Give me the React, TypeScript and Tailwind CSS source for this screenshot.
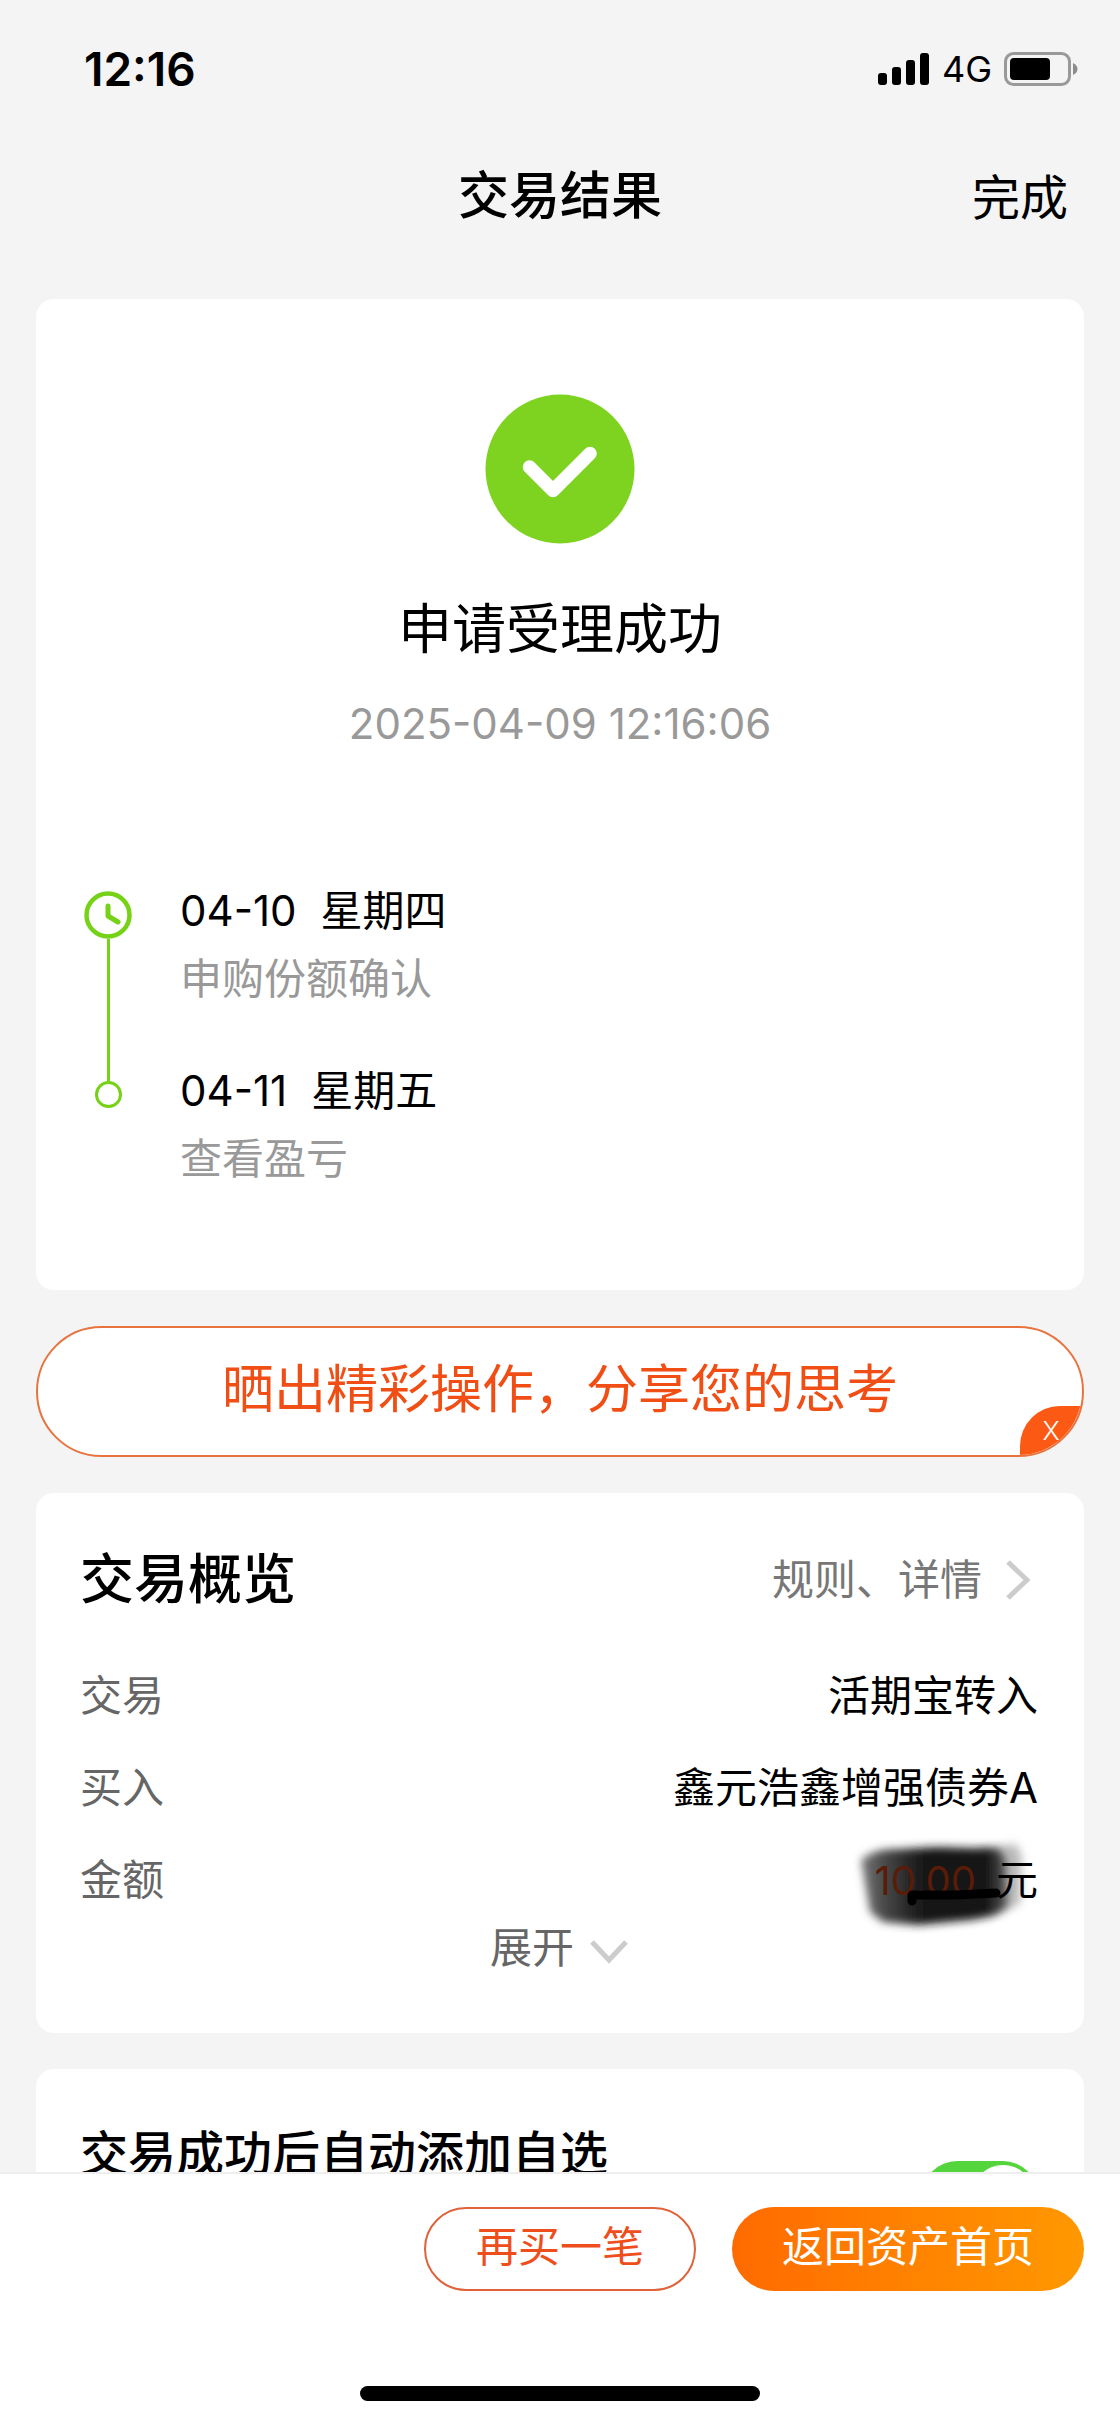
import { useState } from "react";

const steps = [
  { date: "04-10", weekday: "星期四", label: "申购份额确认" },
  { date: "04-11", weekday: "星期五", label: "查看盈亏" },
];

const StatusBar = () => (
  <div className="flex h-[138px] shrink-0 items-center justify-between pl-[84px] pr-[42px]">
    <span className="text-[46px] font-semibold leading-[48px]">12:16</span>
    <div className="flex items-center gap-3">
      <svg width="52" height="34" viewBox="0 0 52 34" aria-hidden="true">
        <rect x="0" y="21" width="9" height="12" rx="3" />
        <rect x="14" y="15" width="9" height="18" rx="3" />
        <rect x="28" y="8" width="9" height="25" rx="3" />
        <rect x="42" y="1" width="9" height="32" rx="3" />
      </svg>
      <span className="text-[36px] leading-[48px]">4G</span>
      <svg width="74" height="36" viewBox="0 0 74 36" aria-hidden="true">
        <rect x="1.5" y="2.5" width="64" height="31" rx="8" fill="none" stroke="#999" strokeWidth="3" />
        <rect x="6" y="7" width="40" height="22" rx="4" />
        <path d="M69 12c3 1.500 4.500 3.500 4.500 6s-1.500 4.500-4.500 6z" fill="#8c8c8c" />
      </svg>
    </div>
  </div>
);

const ClockIcon = () => (
  <svg width="48" height="48" viewBox="0 0 48 48" fill="none" stroke="#76d216" strokeLinecap="round" strokeLinejoin="round" aria-hidden="true">
    <circle cx="24" cy="24" r="21.500" strokeWidth="4.500" />
    <path d="M24 15v10l10 6" strokeWidth="5" />
  </svg>
);

const Row = ({ label, children }: { label: string; children: React.ReactNode }) => (
  <div className="flex h-[92px] items-center justify-between text-[42px] leading-[48px]">
    <dt className="text-[#666]">{label}</dt>
    <dd className="relative isolate">{children}</dd>
  </div>
);

export default function App() {
  const [autoAdd, setAutoAdd] = useState(true);
  const [showBanner, setShowBanner] = useState(true);

  return (
    <div className="flex h-screen flex-col bg-[#f4f4f4] font-[Inter,'Noto_Sans_CJK_SC',sans-serif] text-black">
      <StatusBar />

      {/* Title bar */}
      <header className="grid h-[116px] shrink-0 grid-cols-3 items-center px-[52px]">
        <h1 className="col-start-2 text-center text-[51px] font-medium leading-[64px]">交易结果</h1>
        <button type="button" className="justify-self-end pt-1 text-[48px] leading-[64px]">完成</button>
      </header>

      <main className="flex min-h-0 flex-1 flex-col gap-9 overflow-y-auto px-9 pt-[45px] [scrollbar-width:none]">
        {/* Result */}
        <section className="shrink-0 rounded-[18px] bg-white px-12 pb-[107px] pt-[95px]">
          <div className="flex flex-col items-center">
            <svg width="150" height="150" viewBox="0 0 150 150" aria-hidden="true">
              <circle cx="75" cy="75" r="74.500" fill="#7ed321" />
              <path d="M44.500 73L68 96.500L105 59.500" fill="none" stroke="#fff" strokeWidth="13.500" strokeLinecap="round" strokeLinejoin="round" />
            </svg>
            <h2 className="mt-[54px] text-[54px] leading-[64px]">申请受理成功</h2>
            <time className="mt-[38px] text-[42px] leading-[48px] text-[#999]">2025-04-09 12:16:06</time>
          </div>

          <ol className="mt-[139px]">
            {steps.map((step, i) => (
              <li key={step.date} className="flex gap-12">
                <div className="flex w-12 flex-col items-center">
                  {i === 0 ? (
                    <>
                      <div className="mt-1">
                        <ClockIcon />
                      </div>
                      <div className="w-[3px] flex-1 bg-[#76d216]" />
                    </>
                  ) : (
                    <>
                      <div className="h-[14px] w-[3px] bg-[#76d216]" />
                      <div className="size-[27px] rounded-full border-[3px] border-[#76d216]" />
                    </>
                  )}
                </div>
                <div className={i === 0 ? "pb-16" : ""}>
                  <p className="flex gap-6 text-[42px] leading-[48px]">
                    <span>{step.date}</span>
                    <span>{step.weekday}</span>
                  </p>
                  <p className="mt-5 text-[42px] leading-[48px] text-[#999]">{step.label}</p>
                </div>
              </li>
            ))}
          </ol>
        </section>

        {/* Share banner */}
        {showBanner && (
          <div className="relative flex h-[131px] shrink-0 overflow-hidden rounded-full border-2 border-[#e8733f] bg-white">
            <button type="button" className="flex-1 pb-1 text-[52px] leading-[64px] text-[#f04e14]">
              晒出精彩操作，分享您的思考
            </button>
            <button
              type="button"
              aria-label="关闭"
              onClick={() => setShowBanner(false)}
              className="absolute bottom-0 right-0 h-[49px] w-[62px] rounded-tl-[40px] bg-[#fc5a14] text-[26px] font-light leading-[48px] text-white"
            >
              X
            </button>
          </div>
        )}

        {/* Overview */}
        <section className="shrink-0 rounded-[18px] bg-white pb-[63px] pl-11 pr-[46px] pt-[55px]">
          <div className="flex items-center justify-between">
            <h2 className="text-[54px] font-medium leading-[64px]">交易概览</h2>
            <a href="#rules" className="flex items-center gap-6 pr-2 text-[42px] leading-[48px] text-[#777]">
              规则、详情
              <svg width="24" height="40" viewBox="0 0 24 40" fill="none" stroke="#ccc" strokeWidth="5" aria-hidden="true">
                <path d="M2 2l19 18L2 38" />
              </svg>
            </a>
          </div>
          <dl className="mt-[38px]">
            <Row label="交易">活期宝转入</Row>
            <Row label="买入">鑫元浩鑫增强债券A</Row>
            <Row label="金额">
              <svg className="absolute -top-6 right-0 -z-10" width="190" height="105" viewBox="0 0 190 105" aria-hidden="true">
                <defs>
                  <filter id="soft" x="-20%" y="-20%" width="140%" height="140%">
                    <feGaussianBlur stdDeviation="4" />
                  </filter>
                  <linearGradient id="ink">
                    <stop offset="0" stopColor="#777" />
                    <stop offset="0.18" stopColor="#444" />
                    <stop offset="0.4" stopColor="#1a1a1a" />
                    <stop offset="0.85" stopColor="#111" />
                    <stop offset="1" stopColor="#555" />
                  </linearGradient>
                </defs>
                <path d="M130 16L168 12L174 24L172 72L140 86Z" fill="#bbb" filter="url(#soft)" />
                <path d="M13 28Q26 16 50 17L90 15L150 17L157 26L159 74Q150 84 122 88L70 93L35 90L22 80Z" fill="url(#ink)" filter="url(#soft)" />
              </svg>
              <span className="mr-5 text-[40px] text-[#581c08]">10.00</span>
              元
              <svg className="absolute right-9 top-7" width="96" height="24" viewBox="0 0 96 24" fill="none" stroke="#000" strokeWidth="9" strokeLinecap="round" strokeLinejoin="round" aria-hidden="true">
                <path d="M6 17V11L50 11L90 9" />
              </svg>
            </Row>
          </dl>
          <button type="button" className="mx-auto flex h-11 items-center gap-4 text-[42px] leading-[44px] text-[#666]">
            展开
            <svg className="mt-2" width="38" height="24" viewBox="0 0 38 24" fill="none" stroke="#ccc" strokeWidth="5" aria-hidden="true">
              <path d="M2 2l17 18L36 2" />
            </svg>
          </button>
        </section>

        {/* Watchlist switch */}
        <section className="flex shrink-0 items-center justify-between rounded-[18px] bg-white pb-12 pl-11 pr-[46px] pt-[53px]">
          <label htmlFor="auto-add" className="h-[148px] text-[48px] font-medium leading-[64px]">
            交易成功后自动添加自选
          </label>
          <input
            id="auto-add"
            type="checkbox"
            role="switch"
            checked={autoAdd}
            onChange={(e) => setAutoAdd(e.target.checked)}
            className="h-[70px] w-[116px] appearance-none rounded-full bg-[#ddd] p-1 before:block before:size-[62px] before:rounded-full before:bg-white checked:bg-[#53d53b] checked:before:ml-[46px]"
          />
        </section>
      </main>

      {/* Bottom actions */}
      <footer className="shrink-0 border-t-2 border-[#eee] bg-white px-9 pb-6 pt-[33px]">
        <div className="flex justify-end gap-9">
          <button type="button" className="h-[84px] rounded-full border-2 border-[#e0623a] px-[50px] pb-1 text-[42px] leading-[48px] text-[#ee4e1c]">
            再买一笔
          </button>
          <button type="button" className="h-[84px] rounded-full bg-linear-to-r from-[#ff6a00] to-[#ff9800] px-[50px] pb-1 text-[42px] leading-[48px] text-white">
            返回资产首页
          </button>
        </div>
        <div className="mx-auto mt-[95px] h-[15px] w-[400px] rounded-full bg-black" />
      </footer>
    </div>
  );
}
